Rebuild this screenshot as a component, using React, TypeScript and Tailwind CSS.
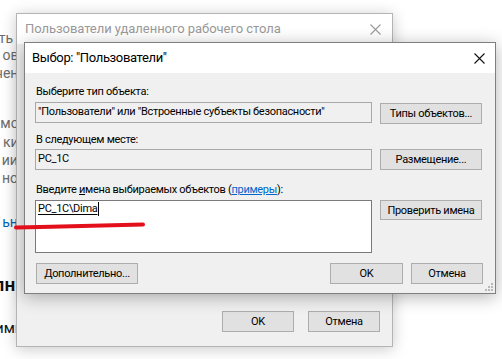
import React from 'react'

const font = { fontFamily: 'Roboto, "Liberation Sans", sans-serif' }

function Btn({ children, className = '' }: { children: React.ReactNode; className?: string }) {
  return (
    <div
      className={`flex items-center justify-center bg-[#e1e1e1] border border-[#adadad] text-[11px] tracking-[-0.3px] text-black leading-none ${className}`}
    >
      {children}
    </div>
  )
}

function CloseX({ color }: { color: string }) {
  return (
    <svg width="11" height="11" viewBox="0 0 11 11">
      <path d="M0.5 0.5 L10.5 10.5 M10.5 0.5 L0.5 10.5" stroke={color} strokeWidth="1.1" />
    </svg>
  )
}

// page text sticking out on the left, behind the dialogs
function BackgroundText() {
  return (
    <div className="absolute left-0 top-0 w-[26px] flex flex-col whitespace-nowrap text-[14px] text-[#6d6d6d]">
      <div className="flex justify-end h-[18px] leading-[18px] mt-[29px] pr-[13px]">ть</div>
      <div className="flex justify-end h-[18px] leading-[18px] mt-[-1px]">ова</div>
      <div className="flex justify-end h-[18px] leading-[18px]">ченк</div>
      <div className="flex justify-end h-[18px] leading-[18px] mt-[32px]">мос</div>
      <div className="flex justify-end h-[18px] leading-[18px] mt-[1px]">кие</div>
      <div className="flex justify-end h-[18px] leading-[18px]">иии</div>
      <div className="flex justify-end h-[18px] leading-[18px]">ноо</div>
      <div className="flex justify-end h-[18px] leading-[18px] mt-[26px] text-[#0067b8]">ьнн</div>
      <div className="flex justify-end h-[24px] leading-[24px] mt-[42px] text-[19px] font-semibold text-[#111]">лнн</div>
      <div className="flex justify-end h-[20px] leading-[20px] mt-[21px] text-[15px] text-[#111]">имм</div>
    </div>
  )
}

function BackDialog() {
  return (
    <div className="absolute left-[16px] top-[13px] w-[377px] h-[334px] flex flex-col bg-[#f0f0f0] border border-[#b4b4b4] shadow-[0_2px_14px_rgba(0,0,0,0.22)]">
      <div className="h-[30px] bg-white flex items-center justify-between pl-[8px] pr-[11px]">
        <span className="text-[13px] tracking-[-0.05px] text-[#9a9a9a]">Пользователи удаленного рабочего стола</span>
        <CloseX color="#9a9a9a" />
      </div>
      <div className="flex-1" />
      <div className="flex justify-end gap-[14px] pr-[12px] pb-[14px]">
        <Btn className="w-[72px] h-[21px]">OK</Btn>
        <Btn className="w-[72px] h-[21px]">Отмена</Btn>
      </div>
    </div>
  )
}

function FrontDialog() {
  return (
    <div className="absolute left-[24px] top-[42px] w-[472px] h-[252px] flex flex-col bg-[#f0f0f0] border border-[#7f7f7f] shadow-[0_3px_16px_rgba(0,0,0,0.3)]">
      <div className="h-[30px] bg-white flex items-center justify-between pl-[7px] pr-[10px]">
        <span className="text-[13px] tracking-[-0.35px] text-black">Выбор: "Пользователи"</span>
        <CloseX color="#111" />
      </div>

      <div className="flex-1 flex flex-col pl-[10px] pr-[12px] pt-[11px] text-[11px] tracking-[-0.3px] text-black">
        <div className="h-[16px] leading-[16px] pl-[1px]">Выберите тип объекта:</div>
        <div className="mt-[2px] grid grid-cols-[337px_102px] gap-x-[8px]">
          <div className="h-[21px] bg-[#f0f0f0] border border-[#a8a8a8] flex items-center px-[2px] whitespace-nowrap">
            "Пользователи" или "Встроенные субъекты безопасности"
          </div>
          <Btn className="h-[21px] mt-[1px]">Типы объектов...</Btn>
        </div>

        <div className="mt-[8px] h-[16px] leading-[16px] pl-[1px]">В следующем месте:</div>
        <div className="mt-[1px] grid grid-cols-[337px_102px] gap-x-[8px]">
          <div className="h-[21px] bg-[#f0f0f0] border border-[#a8a8a8] flex items-center px-[2px]">PC_1C</div>
          <Btn className="h-[21px]">Размещение...</Btn>
        </div>

        <div className="mt-[12px] h-[16px] leading-[16px] pl-[1px]">
          Введите <span className="underline">и</span>мена выбираемых объектов (
          <span className="text-[#0066cc] underline">примеры</span>):
        </div>
        <div className="mt-[2px] grid grid-cols-[337px_102px] gap-x-[8px] items-start">
          <div className="h-[53px] bg-white border border-[#7a7a7a] px-[2px] pt-[1px]">
            <div className="flex items-center h-[14px]">
              <span className="underline underline-offset-[2px] leading-[14px]">PC_1C\Dima</span>
              <span className="w-[1px] h-[14px] bg-black ml-[1px]" />
            </div>
          </div>
          <Btn className="h-[20px]">Проверить имена</Btn>
        </div>

        <div className="mt-[10px] flex items-center pl-[1px]">
          <Btn className="w-[102px] h-[21px]">Дополнительно...</Btn>
          <div className="flex-1" />
          <div className="flex gap-[8px]">
            <Btn className="w-[73px] h-[21px]">OK</Btn>
            <Btn className="w-[72px] h-[21px]">Отмена</Btn>
          </div>
        </div>
      </div>

      <svg className="absolute right-[2px] bottom-[2px]" width="8" height="8" viewBox="0 0 8 8">
        <rect x="6" y="0" width="2" height="2" fill="#b8b8b8" />
        <rect x="3" y="3" width="2" height="2" fill="#b8b8b8" />
        <rect x="6" y="3" width="2" height="2" fill="#b8b8b8" />
        <rect x="0" y="6" width="2" height="2" fill="#b8b8b8" />
        <rect x="3" y="6" width="2" height="2" fill="#b8b8b8" />
        <rect x="6" y="6" width="2" height="2" fill="#b8b8b8" />
      </svg>
    </div>
  )
}

export default function App() {
  return (
    <div className="relative w-[502px] h-[359px] overflow-hidden bg-white" style={font}>
      <BackgroundText />
      <BackDialog />
      <FrontDialog />
      {/* red marker stroke under the typed name */}
      <svg className="absolute left-0 top-0 pointer-events-none" width="502" height="359">
        <path d="M16 227.5 C60 226.5 110 225.5 143 224.5" stroke="#e3101c" strokeWidth="4" strokeLinecap="round" fill="none" />
      </svg>
    </div>
  )
}
